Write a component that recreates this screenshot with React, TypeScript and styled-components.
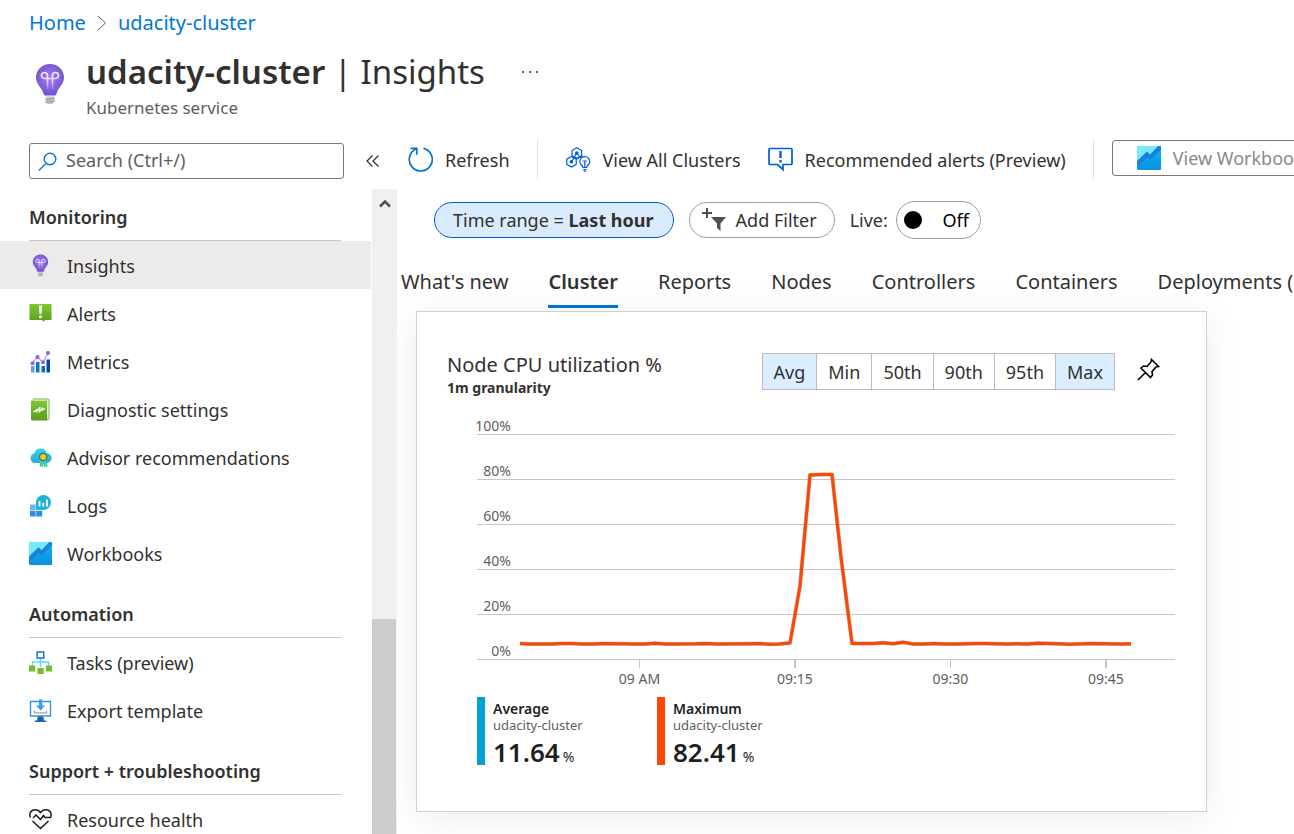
import React from "react";
import styled, { createGlobalStyle } from "styled-components";

const Global = createGlobalStyle`
  *, *::before, *::after { box-sizing: border-box; }
  html, body, #root { height: 100%; }
  body {
    margin: 0;
    background: #fff;
    color: #323130;
    font-family: "Noto Sans", "Open Sans", sans-serif;
    font-size: 18px;
    line-height: 24px;
  }
  button, input { font: inherit; color: inherit; }
  button { background: none; border: 0; padding: 0; cursor: pointer; }
  ul { list-style: none; margin: 0; padding: 0; }
  h1, h2, h3, p { margin: 0; }
  svg { display: block; flex: none; }
`;

const Page = styled.div`
  display: flex;
  flex-direction: column;
  height: 100vh;
  overflow: hidden;
`;

const Breadcrumb = styled.nav`
  display: flex;
  align-items: center;
  gap: 11px;
  height: 46px;
  padding: 0 29px;
  font-size: 20px;
`;

const Crumb = styled.a`
  color: #0078d4;
  text-decoration: none;
`;

const Header = styled.header`
  display: flex;
  gap: 20px;
  height: 94px;
  padding: 2px 34px 0;
`;

const HeaderIcon = styled.div`
  padding-top: 15px;
`;

const TitleRow = styled.div`
  display: flex;
  align-items: center;
  gap: 36px;
`;

const Title = styled.h1`
  font-size: 33px;
  line-height: 48px;
  font-weight: 400;
  white-space: nowrap;
`;

const Strong = styled.strong`
  font-weight: 600;
`;

const Subtitle = styled.p`
  font-size: 17px;
  color: #605e5c;
`;

const Body = styled.div`
  display: grid;
  grid-template-columns: 397px minmax(0, 1fr);
  flex: 1;
  min-height: 0;
`;

const Sidebar = styled.aside`
  display: flex;
  flex-direction: column;
  min-height: 0;
`;

const SearchRow = styled.div`
  display: flex;
  align-items: center;
  gap: 22px;
  padding: 3px 17px 10px 29px;
`;

const SearchBox = styled.label`
  display: flex;
  align-items: center;
  gap: 9px;
  flex: 1;
  height: 36px;
  padding: 0 8px;
  border: 1px solid #7a7876;
  border-radius: 3px;
`;

const SearchInput = styled.input`
  flex: 1;
  min-width: 0;
  border: 0;
  outline: 0;
  padding: 0 0 2px;
  background: none;
  &::placeholder { color: #605e5c; opacity: 1; }
`;

const MenuArea = styled.div`
  display: flex;
  flex: 1;
  min-height: 0;
`;

const Menu = styled.nav`
  display: flex;
  flex-direction: column;
  gap: 12px;
  flex: 1;
  padding-top: 3px;
  overflow: hidden;
`;

const SectionTitle = styled.h2`
  display: flex;
  align-items: center;
  height: 49px;
  margin: 0 30px 0 29px;
  padding-top: 2px;
  border-bottom: 1px solid #c8c6c4;
  font-size: 18px;
  font-weight: 600;
`;

const MenuItem = styled.a<{ $active?: boolean }>`
  display: flex;
  align-items: center;
  gap: 15px;
  height: 48px;
  padding: 0 29px;
  color: inherit;
  text-decoration: none;
  white-space: nowrap;
  background: ${(p) => (p.$active ? "#edebe9" : "transparent")};
`;

const MenuLabel = styled.span`
  padding-top: 2px;
`;

const Scrollbar = styled.div`
  display: grid;
  grid-template-rows: 2fr 1fr;
  width: 25px;
  margin-left: 1px;
  background: #f0f0f0;
`;

const ScrollTrack = styled.div`
  display: flex;
  justify-content: center;
  padding-top: 10px;
`;

const ScrollThumb = styled.div`
  margin-right: 1px;
  background: #cdcdcd;
`;

const Main = styled.main`
  display: flex;
  flex-direction: column;
  min-width: 0;
  overflow: hidden;
`;

const Toolbar = styled.div`
  display: flex;
  align-items: center;
  height: 39px;
  padding-left: 11px;
  white-space: nowrap;
`;

const Command = styled.button`
  display: flex;
  align-items: center;
  flex: none;
  gap: 12px;
  margin-right: 27px;
`;

const Divider = styled.span`
  flex: none;
  width: 1px;
  height: 39px;
  margin-right: 28px;
  background: #e1dfdd;
`;

const WorkbooksButton = styled.button`
  display: flex;
  align-items: center;
  align-self: flex-start;
  flex: none;
  gap: 12px;
  height: 36px;
  padding: 0 24px;
  margin-left: -10px;
  border: 1px solid #7a7876;
  border-radius: 3px;
  color: #8a8886;
`;

const Filters = styled.div`
  display: flex;
  align-items: center;
  gap: 15px;
  height: 38px;
  margin-top: 22px;
  padding-left: 37px;
  white-space: nowrap;
`;

const Pill = styled.button<{ $selected?: boolean }>`
  display: flex;
  align-items: center;
  gap: 10px;
  height: 36px;
  padding: 0 ${(p) => (p.$selected ? "19px 0 18px" : "17px 0 12px")};
  border: 1px solid ${(p) => (p.$selected ? "#015cda" : "#a19f9d")};
  border-radius: 18px;
  background: ${(p) => (p.$selected ? "#daebfd" : "#fff")};
`;

const Live = styled.div`
  display: flex;
  align-items: center;
  gap: 8px;
`;

const Toggle = styled.button`
  display: flex;
  align-items: center;
  justify-content: space-between;
  width: 85px;
  height: 38px;
  padding: 0 11px 0 7px;
  border: 1px solid #a19f9d;
  border-radius: 19px;
  color: #000;
`;

const Knob = styled.span`
  width: 18px;
  height: 18px;
  border-radius: 50%;
  background: #000;
`;

const Tabs = styled.div`
  display: flex;
  gap: 40px;
  height: 50px;
  margin-top: 19px;
  padding-left: 4px;
  font-size: 20px;
  white-space: nowrap;
`;

const Tab = styled.button<{ $active?: boolean }>`
  flex: none;
  border-bottom: 3px solid ${(p) => (p.$active ? "#0078d4" : "transparent")};
  font-weight: ${(p) => (p.$active ? 600 : 400)};
`;

const Card = styled.section`
  flex: none;
  max-width: 791px;
  height: 501px;
  margin: 3px 19px 0;
  padding: 41px 31px 0 30px;
  border: 1px solid #d2d0ce;
  box-shadow: 0 6px 36px rgba(0, 0, 0, 0.08);
`;

const CardHead = styled.div`
  display: flex;
  justify-content: space-between;
  align-items: flex-start;
`;

const CardTitle = styled.h2`
  font-size: 20px;
  line-height: 24px;
  font-weight: 400;
`;

const Granularity = styled.p`
  font-size: 14px;
  line-height: 22px;
  font-weight: 700;
`;

const Controls = styled.div`
  display: flex;
  align-items: center;
  gap: 22px;
  padding-right: 15px;
`;

const Segments = styled.div`
  display: flex;
  border: 1px solid #bebbb8;
`;

const Segment = styled.button<{ $on?: boolean }>`
  height: 35px;
  padding: 0 11px;
  background: ${(p) => (p.$on ? "#daeeff" : "#fff")};
  & + & { border-left: 1px solid #bebbb8; }
`;

const PinButton = styled.button`
  padding-bottom: 4px;
`;

const ChartBox = styled.div`
  margin: 21px 0 0 29px;
  svg { width: 100%; height: auto; overflow: visible; }
`;

const AxisText = styled.text`
  font-size: 14px;
  fill: #605e5c;
`;

const Legend = styled.div`
  display: flex;
  margin: 7px 0 0 30px;
`;

const LegendItem = styled.div<{ $color: string }>`
  width: 180px;
  height: 68px;
  padding-left: 8px;
  border-left: 8px solid ${(p) => p.$color};
  color: #201f1e;
`;

const LegendName = styled.p`
  padding-top: 4px;
  font-size: 14px;
  line-height: 16px;
  font-weight: 600;
`;

const LegendSource = styled.p`
  font-size: 13px;
  line-height: 16px;
  color: #605e5c;
`;

const LegendValue = styled.p`
  font-size: 26px;
  line-height: 38px;
  font-weight: 600;
`;

const Unit = styled.span`
  margin-left: 3px;
  font-size: 14px;
  font-weight: 400;
`;

const Bulb = ({ width, height }: { width: number; height: number }) => (
  <svg width={width} height={height} viewBox="0 0 30 42" aria-hidden="true">
    <defs>
      <radialGradient id="bulb" cx="50%" cy="45%" r="60%">
        <stop offset="0" stopColor="#a67af4" />
        <stop offset="1" stopColor="#6b4fc8" />
      </radialGradient>
      <linearGradient id="filament" gradientUnits="userSpaceOnUse" x1="0" y1="9" x2="0" y2="26">
        <stop offset="0" stopColor="#f4ecff" />
        <stop offset=".5" stopColor="#e9dcff" />
        <stop offset="1" stopColor="#e9dcff" stopOpacity=".2" />
      </linearGradient>
    </defs>
    <path d="M15 1C7 1 1 7 1 14.500c0 7 6 10 7.500 16 .4 1.500 1 2 2 2h9c1 0 1.600-.5 2-2C23 24.500 29 21.500 29 14.500 29 7 23 1 15 1Z" fill="url(#bulb)" />
    <path d="M12.500 26V12.500a3 3 0 1 0-3 3h11a3 3 0 1 0-3-3V26" fill="none" stroke="url(#filament)" strokeWidth="1.700" />
    <path d="M10.500 33.500h9v5L17.500 41h-5l-2-2.500Z" fill="#c4c4c4" />
    <path d="m10.500 37 9-1.500m-9 4 9-1.500" stroke="#8c8c8c" strokeWidth=".8" />
  </svg>
);

const WorkbookIcon = ({ size }: { size: number }) => (
  <svg width={size} height={size} viewBox="0 0 24 24" aria-hidden="true">
    <defs>
      <linearGradient id="wbLow" x1="0" y1="0" x2="0" y2="1">
        <stop offset="0" stopColor="#0ab8f4" />
        <stop offset="1" stopColor="#0a90e0" />
      </linearGradient>
    </defs>
    <rect width="24" height="24" rx="1" fill="url(#wbLow)" />
    <path d="M0 17V1q0-1 1-1h20l-8 9-3-3Z" fill="#76eafd" />
    <path d="m0 15 10-9.500 3 3L21.500 0H23q1 0 1 1v2.500L13 14l-3-2.500-10 9.500Z" fill="#1a80dd" />
  </svg>
);

const icons: Record<string, React.ReactNode> = {
  Insights: <Bulb width={23} height={23} />,
  Alerts: (
    <svg width="23" height="23" viewBox="0 0 23 23" aria-hidden="true">
      <defs>
        <linearGradient id="green" x1="0" y1="0" x2="0" y2="1">
          <stop offset="0" stopColor="#7ccb2c" />
          <stop offset="1" stopColor="#5c9a22" />
        </linearGradient>
      </defs>
      <path d="M1 2h21q.5 0 .5.500v15q0 .5-.5.500H15.500v2L12.500 18H1q-.5 0-.5-.5v-15q0-.5.5-.5Z" fill="url(#green)" />
      <path d="M9.900 3.500h3.200l-.6 8.500h-2Z" fill="#fff" />
      <circle cx="11.500" cy="14.700" r="1.500" fill="#fff" />
    </svg>
  ),
  Metrics: (
    <svg width="23" height="23" viewBox="0 0 23 23" aria-hidden="true">
      <path d="M2 16h3.500v6.500H2Z" fill="#5ea0ef" />
      <path d="M7 12h3.500v10.500H7Z" fill="#0078d4" />
      <path d="M12.500 16H16v6.500h-3.500Z" fill="#1b66b5" />
      <path d="M17.500 9.500H21v13h-3.500Z" fill="#00509f" />
      <path d="m3.500 13 5-6 5.500 5.500 5-9.500" fill="none" stroke="#b796f9" strokeWidth="1.300" />
      <g fill="#9a5ee0">
        <circle cx="3.500" cy="13.300" r="2" />
        <circle cx="8.500" cy="7" r="2" />
        <circle cx="14" cy="12.300" r="2" />
        <circle cx="19" cy="3" r="2" />
      </g>
    </svg>
  ),
  "Diagnostic settings": (
    <svg width="23" height="23" viewBox="0 0 23 23" aria-hidden="true">
      <path d="M4.500 1H19q1 0 1 1V20.500q0 1-1 1H4Z" fill="#fff" stroke="#76b043" />
      <path d="M4.500 .5H19v2H3q0-2 1.500-2Z" fill="#b4d89a" />
      <path d="M2 2.800h16.200V22.500H3q-1 0-1-1Z" fill="url(#green)" />
      <path d="M4.500 14 8 11.500l-.5 3L11 9l-.7 5.500 2.800-4.500.3 2 2.600-1.500" fill="none" stroke="#fff" strokeWidth="1.100" />
    </svg>
  ),
  "Advisor recommendations": (
    <svg width="23" height="23" viewBox="0 0 23 23" aria-hidden="true">
      <defs>
        <linearGradient id="cloud" x1="0" y1="0" x2="0" y2="1">
          <stop offset="0" stopColor="#35d6f6" />
          <stop offset="1" stopColor="#2ba6cb" />
        </linearGradient>
      </defs>
      <path d="M5.500 17A5 5 0 0 1 5.300 7.300 6.500 6.500 0 0 1 17.700 7 5 5 0 0 1 17.500 17Z" fill="url(#cloud)" />
      <path d="m11.500 14-1 7 2-.8 1 1.800 1-4 1.200 4 1.200-1.800 2 .8-2-7Z" fill="#3fcfb4" />
      <circle cx="14.200" cy="11" r="3.600" fill="#ffca00" stroke="#2a6e8c" strokeWidth="1.200" />
    </svg>
  ),
  Logs: (
    <svg width="23" height="23" viewBox="0 0 23 23" aria-hidden="true">
      <path d="M1 10.500h5.600v5.600H1Z" fill="#64b5f2" />
      <path d="M1 16.800h5.600v5.700H1Zm6.200 0h6v5.700h-6Z" fill="#2c8fe0" />
      <path d="M7 8.500A7.500 7.500 0 1 1 14.500 16H7Z" fill="#20b3d5" />
      <path d="M10.500 7v5.500M14.300 9v3.500M18 5.500v7" stroke="#fff" strokeWidth="1.800" />
    </svg>
  ),
  Workbooks: <WorkbookIcon size={23} />,
  "Tasks (preview)": (
    <svg width="23" height="23" viewBox="0 0 23 23" aria-hidden="true">
      <path d="M11.500 7v9M3.500 15v-4h16v4" fill="none" stroke="#50e0f5" strokeWidth="1.400" />
      <path d="M8.200 1h6.600v6H8.200Z" fill="#fff" stroke="#1078d0" strokeWidth="1.500" />
      <path d="M0 14.500h6.200v6H0Zm8.500 2.500h6.200v6H8.500ZM17 14.500h6v6h-6Z" fill="#76bc2d" />
    </svg>
  ),
  "Export template": (
    <svg width="23" height="23" viewBox="0 0 23 23" aria-hidden="true">
      <path d="M1.500 2.500h20v14.500h-20Z" fill="#fff" stroke="#2f95e4" strokeWidth="1.400" />
      <path d="M8.700 17.500h5.600l.7 4h2.200V23H5.800v-1.500H8Z" fill="#1f5fb0" />
      <path d="M5.500 11.500v2.300h12v-2.300" fill="none" stroke="#a3a3a3" strokeWidth="1.300" />
      <path d="M10 .5h3.200v6H16L11.600 11.500 7.200 6.500H10Z" fill="#3b9be8" />
    </svg>
  ),
  "Resource health": (
    <svg width="23" height="23" viewBox="0 0 23 23" fill="none" stroke="#1b1a19" strokeWidth="1.500" aria-hidden="true">
      <path d="M1.500 9.500C-.5 5 2.500 1.800 6 1.800c2.500 0 4.500 1.300 5.500 2.700 1-1.400 3-2.700 5.500-2.700 3.500 0 6.500 3.200 4.500 7.700h-5.500l-1.500-2-3 4-4.500-4.500-3 3M3.500 13l8 7.500 8-7.500" />
    </svg>
  ),
};

const sections = [
  {
    title: "Monitoring",
    items: ["Insights", "Alerts", "Metrics", "Diagnostic settings", "Advisor recommendations", "Logs", "Workbooks"],
  },
  { title: "Automation", items: ["Tasks (preview)", "Export template"] },
  { title: "Support + troubleshooting", items: ["Resource health"] },
];

const tabs = ["What's new", "Cluster", "Reports", "Nodes", "Controllers", "Containers", "Deployments (Preview)"];
const segments = ["Avg", "Min", "50th", "90th", "95th", "Max"];
const yTicks = ["100%", "80%", "60%", "40%", "20%", "0%"];
const xTicks = [
  { x: 163.5, width: 1, label: "09 AM" },
  { x: 319, width: 2, label: "09:15" },
  { x: 474.5, width: 1, label: "09:30" },
  { x: 630, width: 2, label: "09:45" },
];

const cpuLine =
  "M44 223.500 54 224H75L86 223.600H96L107 224H117L127 223.500 138 223.800 148 223.700 158 224H169L179 223.200 190 224.100 200 223.900 220 223.800 231 223.500 241 224 272 223.800 283 223.500 293 224.200 303 223.900 314 223 324 166 334 55 345 54.500H356L365 137 376 223.500 397 223.600 407 222.800 417 223.800 427 222.300 437 223.900 448 224 458 223.400 468 223.900 480 224.100 500 223.600H510L530 224 541 223.700 551 224 562 223.300 582 223.700 593 224.200 614 223.600 645 224 655 223.700";

const legend = [
  { name: "Average", value: "11.64", color: "#00a1d6" },
  { name: "Maximum", value: "82.41", color: "#ff4500" },
];

export default function App() {
  return (
    <Page>
      <Global />
      <Breadcrumb aria-label="Breadcrumb">
        <Crumb href="#">Home</Crumb>
        <svg width="10" height="16" viewBox="0 0 10 16" fill="none" stroke="#605e5c" aria-hidden="true">
          <path d="m1 1 7.500 7L1 15" />
        </svg>
        <Crumb href="#">udacity-cluster</Crumb>
      </Breadcrumb>
      <Header>
        <HeaderIcon>
          <Bulb width={32} height={42} />
        </HeaderIcon>
        <div>
          <TitleRow>
            <Title>
              <Strong>udacity-cluster</Strong> | Insights
            </Title>
            <button aria-label="More">
              <svg width="18" height="4" viewBox="0 0 18 4" fill="#323130">
                <circle cx="2" cy="2" r="1" />
                <circle cx="9" cy="2" r="1" />
                <circle cx="16" cy="2" r="1" />
              </svg>
            </button>
          </TitleRow>
          <Subtitle>Kubernetes service</Subtitle>
        </div>
      </Header>
      <Body>
        <Sidebar>
          <SearchRow>
            <SearchBox>
              <svg width="19" height="19" viewBox="0 0 19 19" fill="none" stroke="#0078d4" strokeWidth="1.400" aria-hidden="true">
                <circle cx="12" cy="7" r="5.800" />
                <path d="M8 11.500.8 18.500" />
              </svg>
              <SearchInput aria-label="Search" placeholder="Search (Ctrl+/)" />
            </SearchBox>
            <button aria-label="Collapse menu">
              <svg width="14" height="14" viewBox="0 0 14 14" fill="none" stroke="#323130" strokeWidth="1.200">
                <path d="M6.500 1.500 1 7l5.500 5.500M12.500 1.500 7 7l5.500 5.500" />
              </svg>
            </button>
          </SearchRow>
          <MenuArea>
            <Menu aria-label="Resource menu">
              {sections.map((s) => (
                <section key={s.title}>
                  <SectionTitle>{s.title}</SectionTitle>
                  <ul>
                    {s.items.map((item) => (
                      <li key={item}>
                        <MenuItem href="#" $active={item === "Insights"}>
                          {icons[item]}
                          <MenuLabel>{item}</MenuLabel>
                        </MenuItem>
                      </li>
                    ))}
                  </ul>
                </section>
              ))}
            </Menu>
            <Scrollbar aria-hidden="true">
              <ScrollTrack>
                <svg width="12" height="9" viewBox="0 0 12 9" fill="none" stroke="#505050" strokeWidth="2.500">
                  <path d="m1 7.500 5-5 5 5" />
                </svg>
              </ScrollTrack>
              <ScrollThumb />
            </Scrollbar>
          </MenuArea>
        </Sidebar>
        <Main>
          <Toolbar>
            <Command>
              <svg width="25" height="25" viewBox="0 0 25 25" fill="none" stroke="#0078d4" strokeWidth="1.700" aria-hidden="true">
                <path d="M15.500 1.300A11.500 11.500 0 1 1 8.500 1.800M2.500 1.300h6.300v6.400" />
              </svg>
              Refresh
            </Command>
            <Divider />
            <Command>
              <svg width="25" height="25" viewBox="0 0 25 25" fill="none" stroke="#015cda" strokeWidth="1.200" aria-hidden="true">
                <path d="m10.800 .8 4.700 2.700v5.200L10.800 11.300 6 8.700V3.500ZM5.500 9.500l4.700 2.600v5.200L5.500 20 .8 17.300v-5.200ZM10.500 12.100l5.200-2.800 5.300 2.800" />
                <path d="M10.800 6 5.500 14.700M10.800 6l3.700 5" />
                <circle cx="10.800" cy="6" r="1.200" fill="#015cda" />
                <circle cx="5.500" cy="14.700" r="1.200" fill="#015cda" />
                <path d="M17 20.500c0-2-3.200-2.800-3.200-5.800a5 5 0 0 1 10 0c0 3-3.200 3.800-3.200 5.800ZM17.200 22.500h3.400M17.800 24.200h2.200" fill="#fff" />
                <path d="M18.800 20v-5.500M16.700 14h4.200" />
              </svg>
              View All Clusters
            </Command>
            <Command>
              <svg width="25" height="25" viewBox="0 0 25 25" fill="none" stroke="#015cda" strokeWidth="1.700" aria-hidden="true">
                <path d="M2 1.500h21q1 0 1 1v14q0 1-1 1h-8v5l-5.500-5H2q-1 0-1-1v-14q0-1 1-1Z" />
                <path d="M12.500 4v7M12.500 13v2.500" strokeWidth="2.400" />
              </svg>
              Recommended alerts (Preview)
            </Command>
            <Divider />
            <WorkbooksButton>
              <WorkbookIcon size={24} />
              View Workbooks
            </WorkbooksButton>
          </Toolbar>
          <Filters>
            <Pill $selected>
              <span>
                Time range = <b>Last hour</b>
              </span>
            </Pill>
            <Pill>
              <svg width="24" height="24" viewBox="0 0 24 24" fill="#505050" aria-hidden="true">
                <path d="M4 0h2v4h4v2H6v4H4V6H0V4h4ZM9 9h15l-5.500 6.500V23l-3.500-3v-4.500Z" />
              </svg>
              Add Filter
            </Pill>
            <Live>
              <span id="live-label">Live:</span>
              <Toggle role="switch" aria-checked="false" aria-labelledby="live-label">
                <Knob />
                Off
              </Toggle>
            </Live>
          </Filters>
          <Tabs role="tablist">
            {tabs.map((t) => (
              <Tab key={t} role="tab" aria-selected={t === "Cluster"} $active={t === "Cluster"}>
                {t}
              </Tab>
            ))}
          </Tabs>
          <Card>
            <CardHead>
              <div>
                <CardTitle>Node CPU utilization %</CardTitle>
                <Granularity>1m granularity</Granularity>
              </div>
              <Controls>
                <Segments>
                  {segments.map((s) => (
                    <Segment key={s} $on={s === "Avg" || s === "Max"}>
                      {s}
                    </Segment>
                  ))}
                </Segments>
                <PinButton aria-label="Pin to dashboard">
                  <svg width="23" height="23" viewBox="0 0 23 23" fill="none" stroke="#000" strokeWidth="1.600">
                    <path d="m14.500 1.500 7 7-2.500.5-4 4.500.5 3.500-2 2.500L4 10l2.500-2 3.500.5L14 4ZM8.500 14.500 1 22" />
                  </svg>
                </PinButton>
              </Controls>
            </CardHead>
            <ChartBox>
              <svg viewBox="0 0 699 270" role="img" aria-label="Node CPU utilization over time">
                {yTicks.map((label, i) => (
                  <g key={label}>
                    <path d={`M1 ${14.5 + i * 45}H699`} stroke="#c8c6c4" />
                    <AxisText x="35" y={11 + i * 45} textAnchor="end">
                      {label}
                    </AxisText>
                  </g>
                ))}
                {xTicks.map((t) => (
                  <g key={t.label}>
                    <path d={`M${t.x} 240v8`} stroke="#c8c6c4" strokeWidth={t.width} />
                    <AxisText x={t.x} y="264" textAnchor="middle">
                      {t.label}
                    </AxisText>
                  </g>
                ))}
                <g fill="none" strokeLinejoin="round">
                  <path d={cpuLine} stroke="#6d6d6d" strokeOpacity=".5" strokeWidth="4" />
                  <path d={cpuLine} stroke="#ff4500" strokeWidth="3" />
                </g>
              </svg>
            </ChartBox>
            <Legend>
              {legend.map((l) => (
                <LegendItem key={l.name} $color={l.color}>
                  <LegendName>{l.name}</LegendName>
                  <LegendSource>udacity-cluster</LegendSource>
                  <LegendValue>
                    {l.value}
                    <Unit>%</Unit>
                  </LegendValue>
                </LegendItem>
              ))}
            </Legend>
          </Card>
        </Main>
      </Body>
    </Page>
  );
}
